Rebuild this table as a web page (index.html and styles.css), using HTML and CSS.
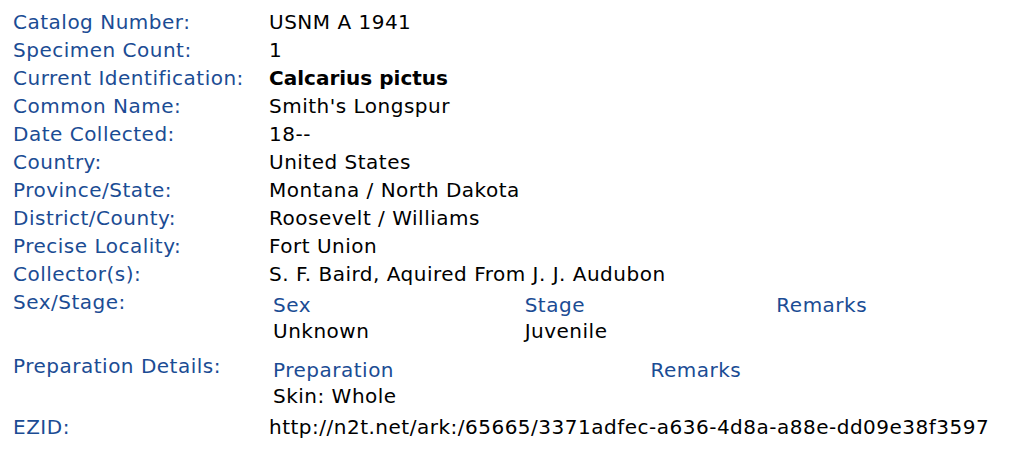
FILE: index.html
```html
<!DOCTYPE html>
<html lang="en">
  <head>
    <meta charset="UTF-8" />
    <meta name="viewport" content="width=device-width, initial-scale=1.0" />
    <link rel="stylesheet" href="styles.css">
    <title>Specimen record</title>
  </head>
  <body>
    <div class="record">
      <div class="row">
        <span class="label">Catalog Number:</span>
        <span class="value">USNM A 1941</span>
      </div>
      <div class="row">
        <span class="label">Specimen Count:</span>
        <span class="value">1</span>
      </div>
      <div class="row">
        <span class="label">Current Identification:</span>
        <span class="value"><b>Calcarius pictus</b></span>
      </div>
      <div class="row">
        <span class="label">Common Name:</span>
        <span class="value">Smith's Longspur</span>
      </div>
      <div class="row">
        <span class="label">Date Collected:</span>
        <span class="value">18--</span>
      </div>
      <div class="row">
        <span class="label">Country:</span>
        <span class="value">United States</span>
      </div>
      <div class="row">
        <span class="label">Province/State:</span>
        <span class="value">Montana / North Dakota</span>
      </div>
      <div class="row">
        <span class="label">District/County:</span>
        <span class="value">Roosevelt / Williams</span>
      </div>
      <div class="row">
        <span class="label">Precise Locality:</span>
        <span class="value">Fort Union</span>
      </div>
      <div class="row">
        <span class="label">Collector(s):</span>
        <span class="value">S. F. Baird, Aquired From J. J. Audubon</span>
      </div>
      <div class="row">
        <span class="label">Sex/Stage:</span>
        <div class="sub sex">
          <span class="sub-head">Sex</span>
          <span class="sub-head">Stage</span>
          <span class="sub-head">Remarks</span>
          <span>Unknown</span>
          <span>Juvenile</span>
          <span></span>
        </div>
      </div>
      <div class="row">
        <span class="label">Preparation Details:</span>
        <div class="sub prep">
          <span class="sub-head">Preparation</span>
          <span class="sub-head">Remarks</span>
          <span>Skin: Whole</span>
          <span></span>
        </div>
      </div>
      <div class="row">
        <span class="label">EZID:</span>
        <span class="value">http://n2t.net/ark:/65665/3371adfec-a636-4d8a-a88e-dd09e38f3597</span>
      </div>
    </div>
  </body>
</html>
```

FILE: styles.css
```css
* {
  margin: 0;
  padding: 0;
}
body {
  background: #fff;
  color: #000;
  font-family: "DejaVu Sans", Verdana, sans-serif;
  font-size: 20px;
  letter-spacing: 0.5px;
}
.record {
  padding: 8px 0 0 13px;
}
.row {
  display: grid;
  grid-template-columns: 256px 1fr;
  line-height: 28px;
  white-space: nowrap;
}
.label {
  color: #1b4c94;
}
b {
  letter-spacing: 0;
}
.sub {
  display: grid;
  line-height: 26px;
}
.sub span {
  padding-left: 4px;
}
.sub-head {
  color: #1b4c94;
}
.sex {
  grid-template-columns: repeat(3, 1fr);
  padding: 4px 0 8px 0;
}
.prep {
  grid-template-columns: repeat(2, 1fr);
  padding: 5px 0 4px 0;
}
```
